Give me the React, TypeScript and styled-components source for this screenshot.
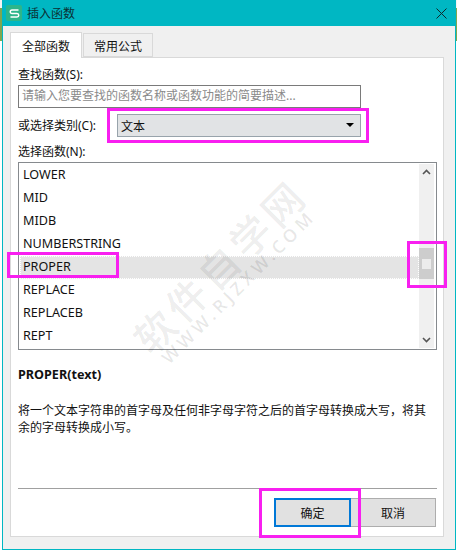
import React from "react";
import styled, { createGlobalStyle } from "styled-components";

const Global = createGlobalStyle`
  html, body { margin: 0; padding: 0; width: 457px; height: 551px; overflow: hidden; background: #fff; }
  * { box-sizing: border-box; }
`;

const Screen = styled.div`
  position: relative;
  width: 457px;
  height: 551px;
  display: flex;
  padding: 0 1px 1px 2px;
  background: linear-gradient(to bottom, #f4f4f4 0, #f4f4f4 8px, #7fa650 8px, #7fa650 41px, #ffffff 41px);
  font-family: "Noto Sans", "Noto Sans CJK SC", sans-serif;
  font-size: 12px;
  color: #111;
`;

const Dialog = styled.div`
  flex: 1;
  display: flex;
  flex-direction: column;
  border: 1px solid #00b7c3;
  border-top: 0;
  background: #f0f0f0;
`;

const TitleBar = styled.div`
  height: 26px;
  flex: none;
  display: flex;
  align-items: center;
  gap: 5px;
  padding: 0 9px 0 4px;
  margin: 0 -1px;
  background: #00b7c3;
  font-size: 12px;
  color: #0c2f33;
`;

const AppIcon = styled.div`
  width: 16px;
  height: 16px;
  border-radius: 2px;
  background: #2db58a;
  display: flex;
  align-items: center;
  justify-content: center;
`;

const TitleText = styled.span`
  flex: 1;
  padding-bottom: 1px;
`;

const Tabs = styled.div`
  display: flex;
  align-items: flex-end;
  height: 31px;
  flex: none;
  padding-left: 7px;
  position: relative;
  z-index: 1;
`;

const Tab = styled.div<{ $active?: boolean }>`
  display: flex;
  align-items: center;
  justify-content: center;
  padding-top: ${(p) => (p.$active ? "0" : "1px")};
  background: ${(p) => (p.$active ? "#fff" : "#f0f0f0")};
  border: 1px solid #d9d9d9;
  width: ${(p) => (p.$active ? "72px" : "70px")};
  height: ${(p) => (p.$active ? "26px" : "24px")};
  margin-bottom: ${(p) => (p.$active ? "-1px" : "0")};
  border-bottom: ${(p) => (p.$active ? "0" : "1px solid #d9d9d9")};
  margin-left: ${(p) => (p.$active ? "0" : "1px")};
`;

const Panel = styled.div`
  position: relative;
  width: 434px;
  height: 480px;
  margin-left: 7px;
  padding: 8px 7px 0 7px;
  background: #fff;
  border: 1px solid #d9d9d9;
  display: flex;
  flex-direction: column;
  overflow: hidden;
`;

const Label = styled.div`
  height: 17px;
  line-height: 17px;
`;

const SearchInput = styled.div`
  margin-top: 2px;
  width: 343px;
  height: 23px;
  border: 1px solid #7a7a7a;
  padding: 0 3px;
  line-height: 20px;
  color: #8a8a8a;
  white-space: nowrap;
  overflow: hidden;
`;

const CategoryRow = styled.div`
  display: flex;
  align-items: center;
  margin-top: 6px;
  height: 23px;
`;

const CategoryLabel = styled.div`
  width: 99px;
  padding-bottom: 2px;
`;

const Select = styled.div`
  width: 244px;
  height: 23px;
  background: #e1e3e5;
  border: 1px solid #98a3ab;
  display: flex;
  align-items: center;
  justify-content: space-between;
  padding: 0 6px 0 3px;
`;

const Caret = styled.span`
  width: 0;
  height: 0;
  margin-top: -2px;
  border-left: 4px solid transparent;
  border-right: 4px solid transparent;
  border-top: 4px solid #000;
`;

const ListLabel = styled(Label)`
  margin-top: 6px;
`;

const ListBox = styled.div`
  margin-top: 2px;
  width: 419px;
  height: 188px;
  border: 1px solid #868a8e;
  padding: 1px;
  display: flex;
`;

const Rows = styled.div`
  flex: 1;
`;

const Row = styled.div<{ $selected?: boolean }>`
  height: 23px;
  line-height: 21px;
  padding-left: 3px;
  font-size: 12.6px;
  background: ${(p) => (p.$selected ? "#e4e4e4" : "transparent")};
  outline: ${(p) => (p.$selected ? "1px dotted #fff" : "none")};
  outline-offset: -1px;
`;

const ScrollTrack = styled.div`
  width: 15px;
  margin-right: 1px;
  background: #f0f0f0;
  display: flex;
  flex-direction: column;
  align-items: center;
  justify-content: space-between;
  position: relative;
`;

const Arrow = styled.svg`
  display: block;
  margin: 5px 0;
`;

const Thumb = styled.div`
  position: absolute;
  left: 0;
  top: 84px;
  width: 15px;
  height: 31px;
  background: #cdcdcd;
  display: flex;
  align-items: center;
  justify-content: center;
`;

const ThumbGrip = styled.div`
  width: 9px;
  height: 10px;
  background: #ececec;
`;

const FuncName = styled.div`
  margin-top: 15px;
  height: 20px;
  line-height: 20px;
  font-size: 12.6px;
  font-weight: 700;
`;

const Description = styled.div`
  margin-top: 17px;
  line-height: 17px;
  width: 410px;
  height: 86px;
`;

const Divider = styled.div`
  height: 1px;
  width: 419px;
  background: #a0a0a0;
  flex: none;
`;

const Buttons = styled.div`
  display: flex;
  justify-content: flex-end;
  margin-top: 9px;
  width: 418px;
`;

const Button = styled.div<{ $primary?: boolean }>`
  width: ${(p) => (p.$primary ? "77px" : "85px")};
  height: 29px;
  display: flex;
  align-items: center;
  justify-content: center;
  background: #e1e1e1;
  border: ${(p) => (p.$primary ? "2px solid #0078d7" : "1px solid #adadad")};
  border-left-width: ${(p) => (p.$primary ? "2px" : "0")};
`;

const Watermark = styled.div`
  position: absolute;
  left: 127px;
  top: 332px;
  transform: rotate(-45deg);
  transform-origin: 0 0;
  color: rgba(0, 0, 0, 0.085);
  font-size: 40px;
  font-weight: 500;
  letter-spacing: 5px;
  line-height: 1;
  white-space: nowrap;
  pointer-events: none;
`;

const WatermarkSub = styled.div`
  position: absolute;
  left: 158px;
  top: 354px;
  transform: rotate(-45deg);
  transform-origin: 0 0;
  color: rgba(0, 0, 0, 0.09);
  font-size: 18px;
  font-weight: 600;
  letter-spacing: 4px;
  line-height: 1;
  white-space: nowrap;
  pointer-events: none;
`;

const Marker = styled.div<{ $x: number; $y: number; $w: number; $h: number }>`
  position: absolute;
  left: ${(p) => p.$x}px;
  top: ${(p) => p.$y}px;
  width: ${(p) => p.$w}px;
  height: ${(p) => p.$h}px;
  border: 3px solid #f81ff0;
  pointer-events: none;
`;

const items = ["LOWER", "MID", "MIDB", "NUMBERSTRING", "PROPER", "REPLACE", "REPLACEB", "REPT"];

export default function App() {
  return (
    <Screen>
      <Global />
      <Dialog>
        <TitleBar>
          <AppIcon>
            <svg width="11" height="11" viewBox="0 0 11 11" fill="none">
              <path d="M9.5 2H3a1.5 1.5 0 0 0 0 3.5h5a1.7 1.7 0 0 1 0 3.5H1.5" stroke="#fff" strokeWidth="1.5" />
            </svg>
          </AppIcon>
          <TitleText>插入函数</TitleText>
          <svg width="11" height="11" viewBox="0 0 11 11" fill="none">
            <path d="M.5.5l10 10M10.5.5l-10 10" stroke="#10282b" strokeWidth="1" />
          </svg>
        </TitleBar>
        <Tabs>
          <Tab $active>全部函数</Tab>
          <Tab>常用公式</Tab>
        </Tabs>
        <Panel>
          <Label>查找函数(S):</Label>
          <SearchInput>请输入您要查找的函数名称或函数功能的简要描述...</SearchInput>
          <CategoryRow>
            <CategoryLabel>或选择类别(C):</CategoryLabel>
            <Select>
              <span>文本</span>
              <Caret />
            </Select>
          </CategoryRow>
          <ListLabel>选择函数(N):</ListLabel>
          <ListBox>
            <Rows>
              {items.map((name) => (
                <Row key={name} $selected={name === "PROPER"}>
                  {name}
                </Row>
              ))}
            </Rows>
            <ScrollTrack>
              <Arrow width="9" height="6" viewBox="0 0 9 6" fill="none">
                <path d="M1 5l3.5-3.5L8 5" stroke="#555" strokeWidth="1.6" />
              </Arrow>
              <Thumb>
                <ThumbGrip />
              </Thumb>
              <Arrow width="9" height="6" viewBox="0 0 9 6" fill="none">
                <path d="M1 1l3.5 3.5L8 1" stroke="#555" strokeWidth="1.6" />
              </Arrow>
            </ScrollTrack>
          </ListBox>
          <FuncName>PROPER(text)</FuncName>
          <Description>
            将一个文本字符串的首字母及任何非字母字符之后的首字母转换成大写，将其余的字母转换成小写。
          </Description>
          <Divider />
          <Buttons>
            <Button $primary>确定</Button>
            <Button>取消</Button>
          </Buttons>
        </Panel>
      </Dialog>
      <Watermark>软件自学网</Watermark>
      <WatermarkSub>WWW.RJZXW.COM</WatermarkSub>
      <Marker $x={107} $y={108} $w={262} $h={35} />
      <Marker $x={7} $y={252} $w={112} $h={26} />
      <Marker $x={407} $y={241} $w={40} $h={47} />
      <Marker $x={259} $y={488} $w={102} $h={50} />
    </Screen>
  );
}
